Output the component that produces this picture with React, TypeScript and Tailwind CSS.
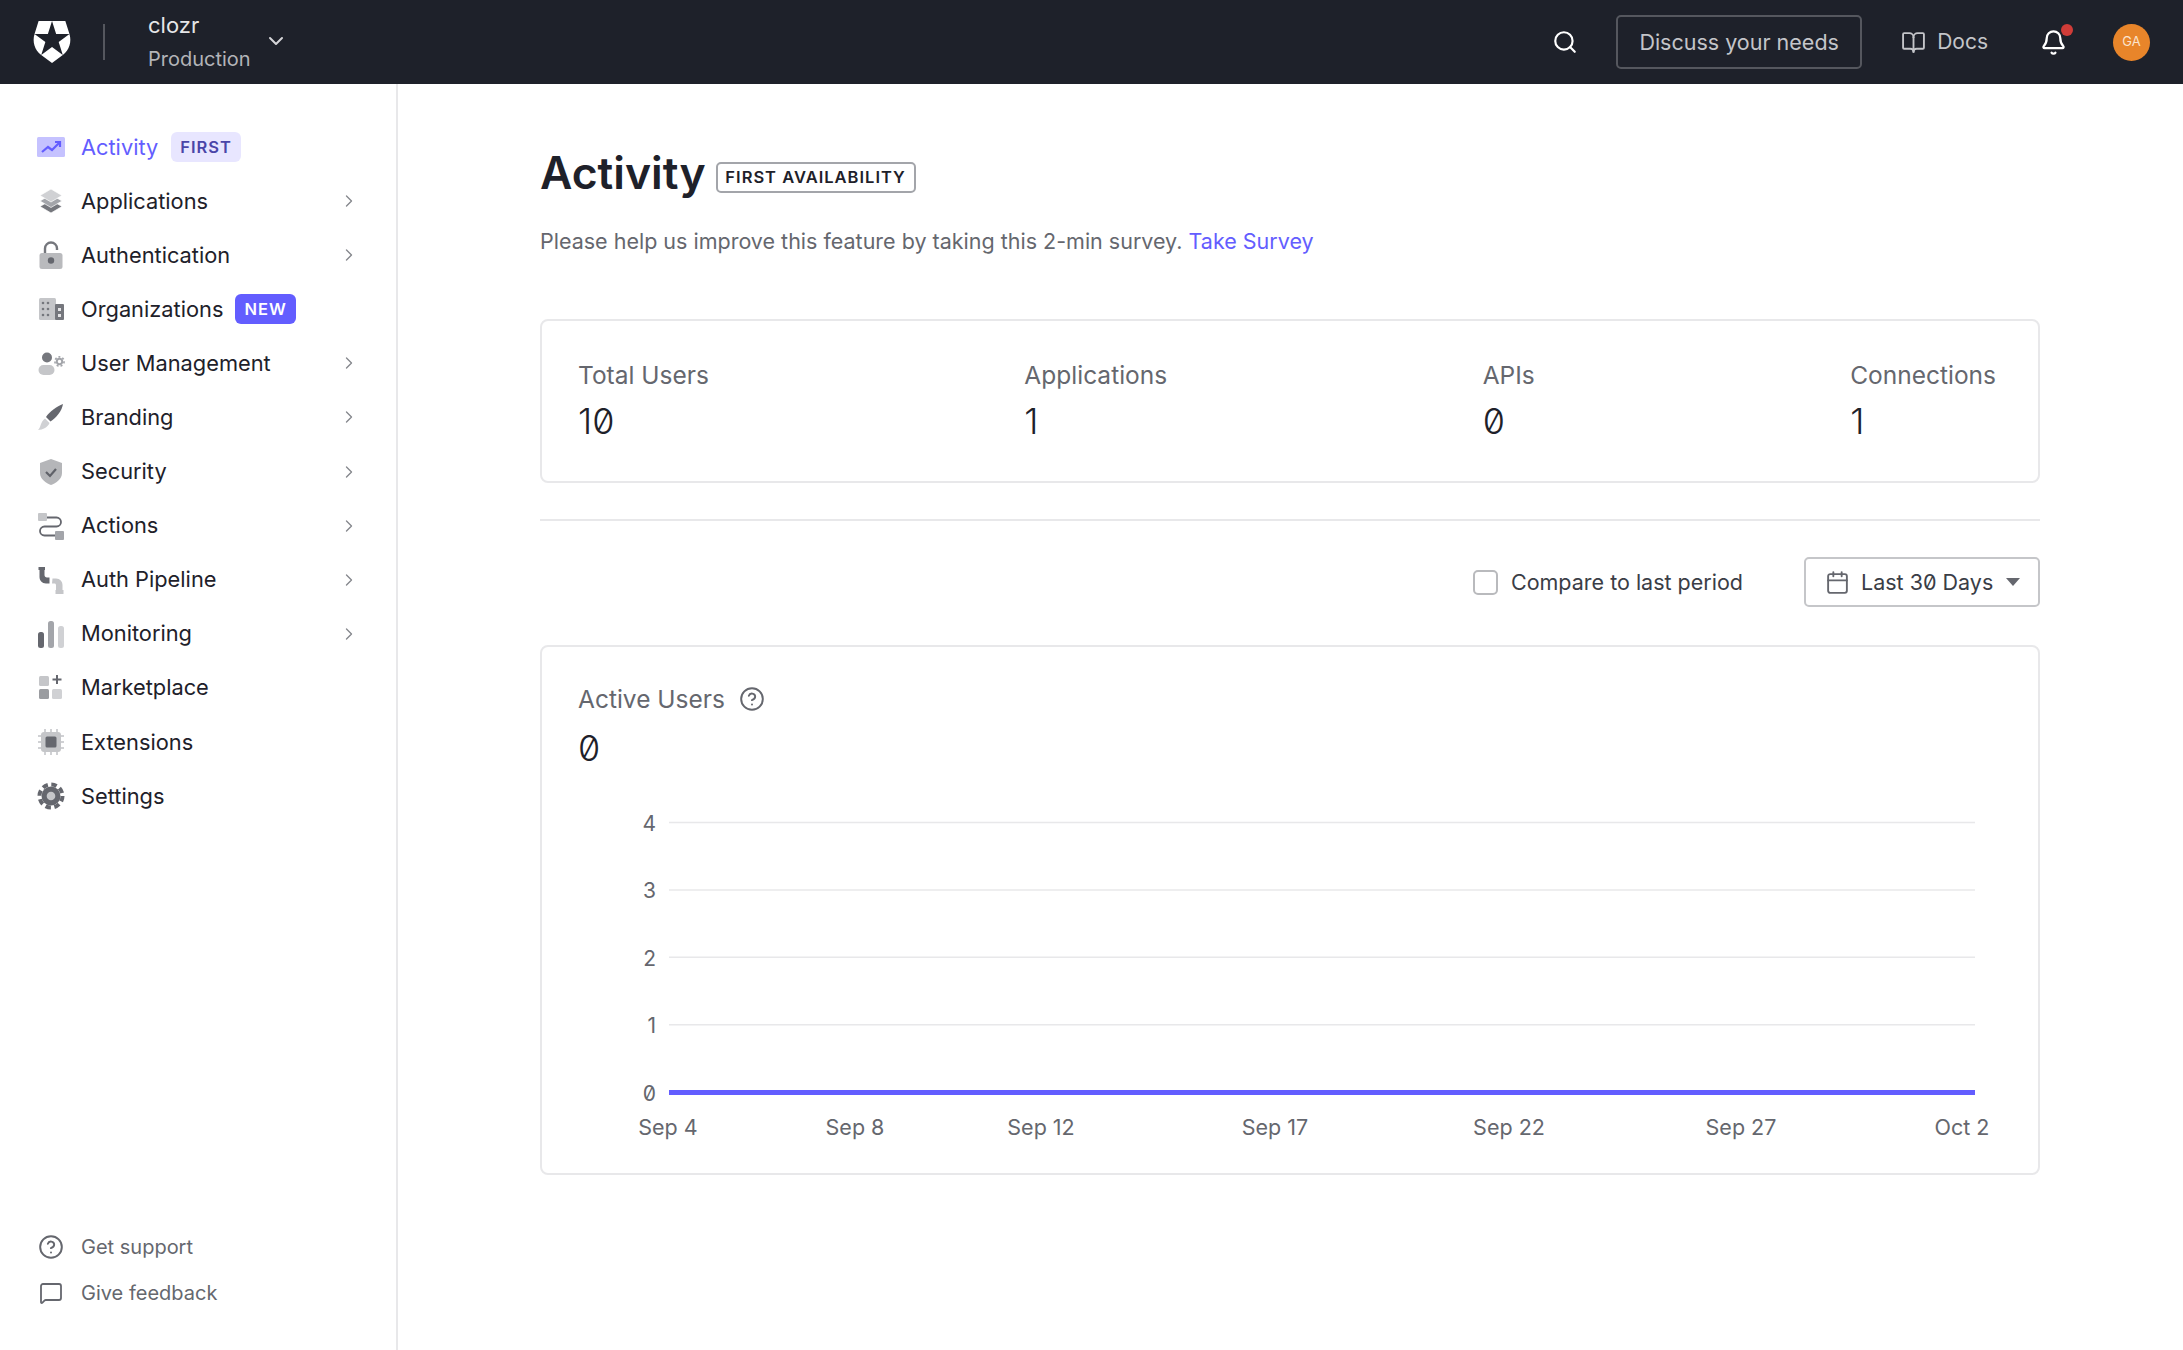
import { BookOpen, Bell, Calendar, ChevronDown, ChevronRight, CircleHelp, MessageSquare, Search } from 'lucide-react';
import { SiAuth0 } from 'react-icons/si';
import type { ReactNode } from 'react';

const dark = '#65676e';
const mid = '#a3a5aa';
const light = '#d0d1d4';

function Glyph({ children }: { children: ReactNode }) {
    return (
        <svg viewBox="0 0 28 28" className="w-[28px] h-[28px] shrink-0">
            {children}
        </svg>
    );
}

const icons: Record<string, ReactNode> = {
    activity: (
        <Glyph>
            <rect x="0" y="4" width="28" height="20" rx="1.5" fill="#c5c2ff" />
            <path d="M5 19l6-5 4 3 7-7" fill="none" stroke="#635dff" strokeWidth="2.2" />
            <path d="M18 9h5v5" fill="none" stroke="#635dff" strokeWidth="2.2" />
        </Glyph>
    ),
    applications: (
        <Glyph>
            <path d="M3 19.5L14 13l11 6.5L14 26z" fill="#75777d" stroke="#fff" strokeWidth="0.7" />
            <path d="M3 14L14 7.5 25 14l-11 6.5z" fill={mid} stroke="#fff" strokeWidth="0.7" />
            <path d="M3 8.5L14 2l11 6.5L14 15z" fill={light} stroke="#fff" strokeWidth="0.7" />
        </Glyph>
    ),
    authentication: (
        <Glyph>
            <rect x="2.5" y="12" width="23" height="16" rx="2.5" fill="#b9babd" />
            <path d="M8 12V7.5a6 6 0 0 1 12 0V9" fill="none" stroke="#75777d" strokeWidth="2.4" />
            <circle cx="14" cy="19.5" r="3.2" fill={dark} />
        </Glyph>
    ),
    organizations: (
        <Glyph>
            <rect x="2" y="3" width="17" height="22" rx="1.5" fill="#c5c6c9" />
            <rect x="18" y="9" width="9" height="16" rx="1" fill="#75777d" />
            <g fill="#75777d">
                <circle cx="6" cy="8" r="1.3" />
                <circle cx="11" cy="8" r="1.3" />
                <circle cx="6" cy="14" r="1.3" />
                <circle cx="11" cy="14" r="1.3" />
                <circle cx="6" cy="20" r="1.3" />
                <circle cx="11" cy="20" r="1.3" />
            </g>
            <rect x="21" y="13" width="3" height="3" fill="#e5e5e7" />
            <rect x="21" y="19" width="3" height="3" fill="#e5e5e7" />
        </Glyph>
    ),
    users: (
        <Glyph>
            <circle cx="10" cy="8.5" r="5" fill="#75777d" />
            <rect x="1.5" y="16" width="16" height="10" rx="5" fill="#c5c6c9" />
            <circle cx="22.5" cy="12.5" r="2.7" fill="none" stroke={mid} strokeWidth="2" />
            <circle cx="22.5" cy="12.5" r="4.6" fill="none" stroke={mid} strokeWidth="1.6" strokeDasharray="2 2" />
        </Glyph>
    ),
    branding: (
        <Glyph>
            <path d="M26 1C20 3 12 9 9 14l4.5 4.5C19 15 25 8 26 1z" fill={dark} />
            <path d="M8 15.5l4.5 4.5C11 24 6 27 1 27c3-2 2-8 7-11.500z" fill={light} />
        </Glyph>
    ),
    security: (
        <Glyph>
            <path d="M14 1l11 4v10c0 6-6 10-11 12C9 25 3 21 3 15V5z" fill="#b5b6b9" />
            <path d="M9 14l4 4 6-7" fill="none" stroke="#5f6168" strokeWidth="2.2" />
        </Glyph>
    ),
    actions: (
        <Glyph>
            <path d="M10 5.500h9.500a4.500 4.500 0 0 1 0 9H7.500a4.500 4.500 0 0 0 0 9H18" fill="none" stroke={dark} strokeWidth="1.8" />
            <rect x="1" y="1" width="9" height="8" rx="1" fill="#c5c6c9" />
            <rect x="18" y="19" width="9" height="9" rx="1" fill={mid} />
        </Glyph>
    ),
    pipeline: (
        <Glyph>
            <path d="M1.500 1h6.500v3H7.500v5c0 1.500 1 2.500 2.500 2.500h2.500v6H9C5 17.500 2.500 14.500 2.500 11V4h-1z" fill={dark} />
            <path d="M15.500 12.500H19c4 0 6.500 3 6.500 6.500v5h1v4h-8v-4h.5v-5c0-.8-.7-1.500-1.500-1.500h-2.500z" fill="#c5c6c9" />
        </Glyph>
    ),
    monitoring: (
        <Glyph>
            <rect x="1" y="12" width="6" height="16" rx="2.5" fill={dark} />
            <rect x="11" y="1" width="6" height="27" rx="2.5" fill={mid} />
            <rect x="21" y="6" width="6" height="22" rx="2.5" fill={light} />
        </Glyph>
    ),
    marketplace: (
        <Glyph>
            <rect x="2" y="2" width="10" height="10" rx="1.5" fill="#c5c6c9" />
            <rect x="2" y="15" width="10" height="10" rx="1.5" fill="#9a9ca0" />
            <rect x="15" y="15" width="10" height="10" rx="1.5" fill={light} />
            <path d="M20 1v9M15.500 5.500h9" stroke={dark} strokeWidth="2" />
        </Glyph>
    ),
    extensions: (
        <Glyph>
            <path d="M8 1v26M14 1v26M20 1v26M1 8h26M1 14h26M1 20h26" stroke={light} strokeWidth="2" />
            <rect x="4" y="4" width="20" height="20" rx="3" fill="#c5c6c9" />
            <rect x="8.500" y="8.500" width="11" height="11" rx="1.500" fill={dark} />
        </Glyph>
    ),
    settings: (
        <Glyph>
            <circle cx="14" cy="14" r="9.500" fill={dark} />
            <circle cx="14" cy="14" r="11.500" fill="none" stroke={dark} strokeWidth="4" strokeDasharray="5.500 3.530" />
            <circle cx="14" cy="14" r="4.300" fill="#c5c6c9" />
        </Glyph>
    ),
};

const nav = [
    { label: 'Activity', icon: 'activity', badge: 'FIRST', active: true },
    { label: 'Applications', icon: 'applications', arrow: true },
    { label: 'Authentication', icon: 'authentication', arrow: true },
    { label: 'Organizations', icon: 'organizations', badge: 'NEW' },
    { label: 'User Management', icon: 'users', arrow: true },
    { label: 'Branding', icon: 'branding', arrow: true },
    { label: 'Security', icon: 'security', arrow: true },
    { label: 'Actions', icon: 'actions', arrow: true },
    { label: 'Auth Pipeline', icon: 'pipeline', arrow: true },
    { label: 'Monitoring', icon: 'monitoring', arrow: true },
    { label: 'Marketplace', icon: 'marketplace' },
    { label: 'Extensions', icon: 'extensions' },
    { label: 'Settings', icon: 'settings' },
];

const stats = [
    { label: 'Total Users', value: '10' },
    { label: 'Applications', value: '1' },
    { label: 'APIs', value: '0' },
    { label: 'Connections', value: '1' },
];

const yTicks = ['4', '3', '2', '1', '0'];
const xTicks = [
    { label: 'Sep 4', x: 126 },
    { label: 'Sep 8', x: 313 },
    { label: 'Sep 12', x: 499 },
    { label: 'Sep 17', x: 733 },
    { label: 'Sep 22', x: 967 },
    { label: 'Sep 27', x: 1199 },
    { label: 'Oct 2', x: 1420 },
];

function Chart() {
    return (
        <svg viewBox="0 0 1498 360" className="w-[1498px] h-[360px] block">
            {yTicks.map((t, i) => {
                const y = 22.5 + i * 67.4;
                return (
                    <g key={t}>
                        {i < 4 && <line x1="127" x2="1433" y1={y} y2={y} stroke="#e8e8ea" strokeWidth="1.5" />}
                        <text
                            x="114"
                            y={y + 8.5}
                            textAnchor="end"
                            fontSize="21"
                            fill="#65676e"
                            style={{ fontFamily: 'Inter, sans-serif', fontFeatureSettings: '"zero"' }}
                        >
                            {t}
                        </text>
                    </g>
                );
            })}
            <line x1="127" x2="1433" y1="292.500" y2="292.500" stroke="#635dff" strokeWidth="5" />
            {xTicks.map((t) => (
                <text
                    key={t.label}
                    x={t.x}
                    y="335"
                    textAnchor="middle"
                    fontSize="21.500"
                    fill="#65676e"
                    style={{ fontFamily: 'Inter, sans-serif' }}
                >
                    {t.label}
                </text>
            ))}
        </svg>
    );
}

export default function App() {
    return (
        <div className="h-screen flex flex-col overflow-hidden bg-white text-[#1e212a] font-['Inter',sans-serif] text-[21.500px]">
            {/* top bar */}
            <header className="h-[84px] shrink-0 bg-[#1e212a] flex items-center pl-[31px] pr-[33px]">
                <SiAuth0 size={42} className="text-white" />
                <div className="w-[2px] h-[36px] bg-[#55575e] ml-[30px]" />
                <div className="ml-[43px] flex flex-col">
                    <span className="text-[#e6e6e8] text-[22px] leading-[34px]">clozr</span>
                    <span className="text-[#b3b4b8] text-[20px] leading-[34px]">Production</span>
                </div>
                <ChevronDown size={24} strokeWidth={2} className="text-[#d5d5d8] ml-[13px] mt-[-2px]" />

                <Search size={26} strokeWidth={2} className="text-white ml-auto" />
                <button className="ml-[38px] w-[246px] h-[54px] border-2 border-[#55575e] rounded-[5px] text-[#c4c5c9] text-[21.500px] text-center">
                    Discuss your needs
                </button>
                <div className="ml-[39px] flex items-center gap-[11px] text-[#c4c5c9] text-[21px]">
                    <BookOpen size={25} strokeWidth={1.8} />
                    <span>Docs</span>
                </div>
                <div className="relative ml-[52px]">
                    <Bell size={27} strokeWidth={2} className="text-white" />
                    <span className="absolute top-[-5px] right-[-6px] w-[12px] h-[12px] rounded-full bg-[#d03c38]" />
                </div>
                <div className="ml-[46px] w-[37px] h-[37px] rounded-full bg-[#e8852a] text-[#fbe3cc] text-[13px] flex items-center justify-center">
                    GA
                </div>
            </header>

            <div className="flex flex-1 min-h-0">
                {/* sidebar */}
                <aside className="w-[398px] shrink-0 border-r-2 border-[#e8e8ea] flex flex-col justify-between pt-[36px] pb-[43px] text-[21.800px]">
                    <nav className="flex flex-col">
                        {nav.map((item) => (
                            <div key={item.label} className="h-[54.080px] flex items-center pl-[37px] pr-[37px]">
                                {icons[item.icon]}
                                <span className={`ml-[16px] ${item.active ? 'text-[#635dff]' : ''}`}>{item.label}</span>
                                {item.badge === 'FIRST' && (
                                    <span className="ml-[13px] h-[30px] px-[9px] rounded-[6px] bg-[#e8e6ff] text-[#4a45a8] text-[16.500px] font-semibold tracking-[1px] flex items-center">
                                        FIRST
                                    </span>
                                )}
                                {item.badge === 'NEW' && (
                                    <span className="ml-[12px] h-[30px] px-[9px] rounded-[6px] bg-[#635dff] text-white text-[16.500px] font-semibold tracking-[1px] flex items-center">
                                        NEW
                                    </span>
                                )}
                                {item.arrow && <ChevronRight size={20} strokeWidth={1.6} className="ml-auto text-[#85878c]" />}
                            </div>
                        ))}
                    </nav>
                    <div className="flex flex-col gap-[18px] text-[#65676e] text-[20px] pl-[37px]">
                        <div className="h-[28px] flex items-center gap-[16px]">
                            <CircleHelp size={26} strokeWidth={1.8} className="mx-[1px]" />
                            <span>Get support</span>
                        </div>
                        <div className="h-[28px] flex items-center gap-[16px]">
                            <MessageSquare size={24} strokeWidth={1.8} className="mx-[2px]" />
                            <span>Give feedback</span>
                        </div>
                    </div>
                </aside>

                {/* content */}
                <main className="flex-1 pl-[142px] pt-[60px]">
                    <div className="w-[1500px]">
                        <div className="flex items-center h-[58px]">
                            <h1 className="text-[44.500px] font-semibold">Activity</h1>
                            <span className="ml-[10px] mt-[8px] h-[31px] w-[200px] border-2 border-[#a3a5aa] rounded-[5px] text-[16.500px] font-semibold tracking-[1px] flex items-center justify-center">
                                FIRST AVAILABILITY
                            </span>
                        </div>
                        <p className="mt-[24px] h-[30px] leading-[30px] text-[#65676e]">
                            Please help us improve this feature by taking this 2-min survey.{' '}
                            <a className="text-[#635dff]">Take Survey</a>
                        </p>

                        <div className="mt-[63px] h-[164px] border-2 border-[#e8e8ea] rounded-[8px] flex justify-between pl-[36px] pr-[42px] pt-[38px]">
                            {stats.map((s) => (
                                <div key={s.label} className="flex flex-col">
                                    <span className="text-[#65676e] text-[24.500px] leading-[32px]">{s.label}</span>
                                    <span className="mt-[7px] text-[36px] leading-[46px] font-light [font-feature-settings:'zero']">{s.value}</span>
                                </div>
                            ))}
                        </div>

                        <div className="mt-[36px] border-t-2 border-[#e8e8ea]" />

                        <div className="mt-[36px] h-[50px] flex items-center justify-end">
                            <span className="w-[25px] h-[25px] border-2 border-[#b9babd] rounded-[5px]" />
                            <span className="ml-[13px] text-[#3a3d46]">Compare to last period</span>
                            <button className="ml-[61px] w-[236px] h-[50px] border-2 border-[#c5c6c9] rounded-[5px] flex items-center pl-[19px] text-[#3a3d46]">
                                <Calendar size={25} strokeWidth={1.8} className="text-[#65676e]" />
                                <span className="ml-[11px] [font-feature-settings:'zero']">Last 30 Days</span>
                                <svg viewBox="0 0 14 8" className="ml-[13px] w-[14px] h-[8px]">
                                    <path d="M0 0h14L7 8z" fill="#65676e" />
                                </svg>
                            </button>
                        </div>

                        <div className="mt-[38px] h-[530px] border-2 border-[#e8e8ea] rounded-[8px]">
                            <div className="pl-[36px] pt-[36px] h-[153px]">
                                <div className="flex items-center h-[32px] text-[#65676e] text-[24.500px]">
                                    <span>Active Users</span>
                                    <CircleHelp size={26} strokeWidth={1.8} className="ml-[14px]" />
                                </div>
                                <div className="mt-[10px] text-[36px] leading-[46px] font-light [font-feature-settings:'zero']">0</div>
                            </div>
                            <Chart />
                        </div>
                    </div>
                </main>
            </div>
        </div>
    );
}
